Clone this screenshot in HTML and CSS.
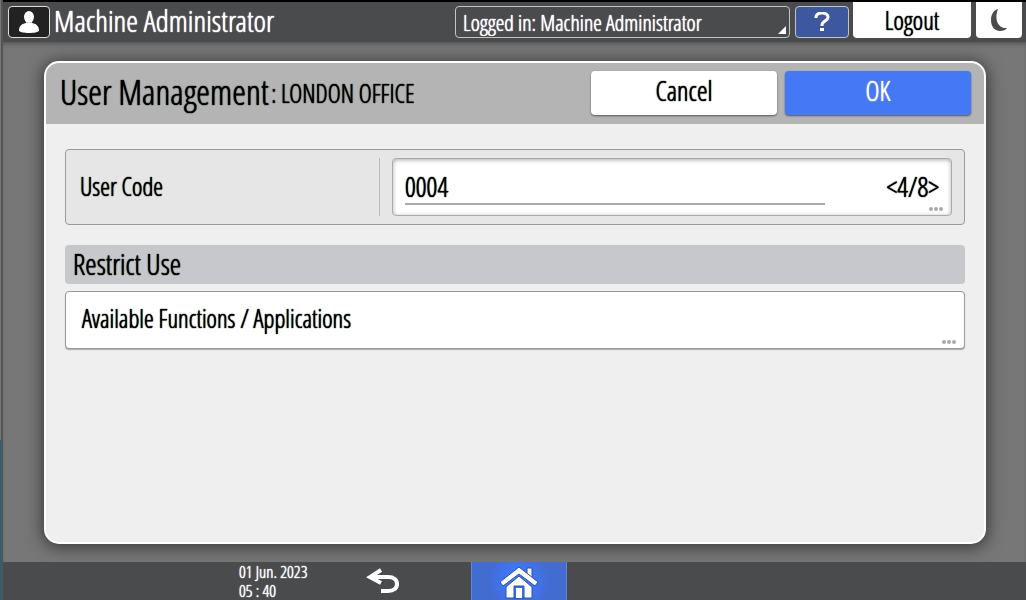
FILE: index.html
```html
<!doctype html>
<html lang="en">
    <head>
        <meta charset="utf-8" />
        <meta name="viewport" content="width=device-width, initial-scale=1" />
        <title>User Management</title>
        <link rel="stylesheet" href="styles.css">
    </head>
    <body>
        <header class="topbar">
            <span class="user-badge">
                <svg width="20" height="22" viewBox="0 0 20 22" fill="#fff" aria-hidden="true">
                    <ellipse cx="10" cy="6" rx="5" ry="6" />
                    <path d="M7 11q3 2 6 0v1c5 1 7 4 7 7v1c-1 1-5 2-10 2S1 21 0 20v-1c0-3 2-6 7-7z" />
                </svg>
            </span>
            <span class="user-name">Machine Administrator</span>

            <div class="login">
                <select class="login-select" aria-label="Logged in user">
                    <option>Logged in: Machine Administrator</option>
                </select>
            </div>
            <button type="button" class="help-button" aria-label="Help">
                <svg width="16" height="20" viewBox="0 0 16 20" aria-hidden="true">
                    <path d="M2 6V5c0-2 2-4 6-4s6 2 6 4c0 4-6 4-6 8v1" fill="none" stroke="#fff" stroke-width="3" />
                    <path d="M6 16h4v3H6z" fill="#fff" />
                </svg>
            </button>
            <button type="button" class="logout-button">Logout</button>
            <button type="button" class="sleep-button" aria-label="Sleep">
                <svg width="18" height="22" viewBox="0 0 18 22" fill="#4a4b4d" aria-hidden="true">
                    <path d="M8 0C4 1 1 5 1 11c0 7 4 11 9 11 3 0 6-1 7-3C8 20 4 10 8 0z" />
                </svg>
            </button>
        </header>

        <main class="screen">
            <form class="dialog">
                <div class="dialog-header">
                    <h1 class="dialog-title">User Management <small>: LONDON OFFICE</small></h1>
                    <button type="button" class="button">Cancel</button>
                    <button type="button" class="button button-primary">OK</button>
                </div>

                <div class="dialog-body">
                    <div class="field">
                        <label class="field-label" for="user-code">User Code</label>
                        <div class="field-box">
                            <input type="text" id="user-code" class="field-input" value="0004" maxlength="8" />
                            <span class="field-count">&lt;4/8&gt;</span>
                            <span class="dots"><i></i><i></i><i></i></span>
                        </div>
                    </div>

                    <h2 class="section-title">Restrict Use</h2>
                    <button type="button" class="row-button">
                        Available Functions / Applications
                        <span class="dots"><i></i><i></i><i></i></span>
                    </button>
                </div>
            </form>
        </main>

        <footer class="bottombar">
            <time class="clock" datetime="2023-06-01T05:40">
                <span>01 Jun. 2023</span>
                <span>05 : 40</span>
            </time>
            <button type="button" class="back-button" aria-label="Back">
                <svg width="34" height="26" viewBox="0 0 34 26" fill="none" stroke="#fff" stroke-width="4" aria-hidden="true">
                    <path d="M16 2 5 9l11 6" />
                    <path d="M5 9h18c6 0 9 3 9 7s-3 7-9 7h-7" />
                </svg>
            </button>
            <button type="button" class="home-button" aria-label="Home">
                <svg width="40" height="34" viewBox="0 0 40 34" fill="#fff" stroke="#2a50a8" aria-hidden="true">
                    <path d="M28 2h5v13l-5-4z" />
                    <path d="M20 10 33 21v11H7V21z" />
                    <path d="M15 20h10v12H15z" fill="#3d6fec" />
                    <path d="M17 22h6v10h-6z" stroke="none" />
                    <path d="M20 1 39 16l-3 4L20 8 4 20l-3-4z" />
                </svg>
            </button>
        </footer>
    </body>
</html>
```

FILE: styles.css
```css
* {
    box-sizing: border-box;
}

body {
    display: flex;
    flex-direction: column;
    min-height: 100vh;
    margin: 0;
    padding-left: 3px;
    background: linear-gradient(#777 440px, #1c6485 440px) no-repeat 0 0 / 1px 100%, #555;
    font-family: "Open Sans Condensed Light", "Roboto Condensed", "Liberation Sans Narrow", "Liberation Sans", sans-serif;
    font-size: 25px;
    color: #000;
    text-shadow: 0 0 1px currentColor, 0 0 1px currentColor;
}

button,
input,
select {
    margin: 0;
    padding: 0;
    border: 0;
    font: inherit;
    color: inherit;
    text-shadow: inherit;
}

svg {
    display: block;
}

/* Top bar */
.topbar {
    display: flex;
    align-items: center;
    height: 42px;
    padding: 0 4px 0 5px;
    border-top: 2px solid #000;
    background: #4a4b4d;
    color: #fff;
}

.user-badge {
    display: flex;
    align-items: center;
    justify-content: center;
    width: 42px;
    height: 32px;
    margin-right: 4px;
    border: 1px solid #ddd;
    border-radius: 4px;
    background: #222;
}

.user-name {
    flex: 1;
    padding-bottom: 2px;
    font-size: 30px;
    line-height: 32px;
    white-space: nowrap;
}

.login {
    position: relative;
    width: 335px;
    margin-right: 5px;
}

.login-select {
    display: block;
    width: 100%;
    height: 32px;
    padding: 0 7px;
    border: 1px solid #c4c4c4;
    border-radius: 4px;
    background: #4a4b4d;
    font-size: 22px;
    line-height: 28px;
    appearance: none;
}

.login::after {
    content: "";
    position: absolute;
    right: 4px;
    bottom: 4px;
    border-left: 8px solid transparent;
    border-bottom: 8px solid #fff;
}

.help-button {
    display: flex;
    align-items: center;
    justify-content: center;
    width: 54px;
    height: 32px;
    margin-right: 4px;
    border: 1px solid #c4c4c4;
    border-radius: 4px;
    background: #3d589f;
}

.logout-button,
.sleep-button {
    align-self: flex-start;
    height: 36px;
    border-radius: 0 0 4px 4px;
    background: #fff;
    color: #000;
    line-height: 36px;
}

.logout-button {
    width: 118px;
    margin-right: 5px;
}

.sleep-button {
    display: flex;
    align-items: center;
    justify-content: center;
    width: 46px;
}

/* Dialog */
.screen {
    display: flex;
    flex: 1;
    padding: 19px 40px 18px 41px;
    background: #777;
    box-shadow: inset 0 4px 4px -2px #555;
}

.dialog {
    flex: 1;
    overflow: hidden;
    border: 2px solid #fff;
    border-radius: 15px;
    background: #efefef;
    box-shadow: 0 2px 16px 2px rgba(0, 0, 0, 0.5);
}

.dialog-header {
    display: flex;
    align-items: center;
    gap: 8px;
    height: 61px;
    padding: 0 13px 2px 14px;
    background: #b4b4b4;
}

.dialog-title {
    flex: 1;
    margin: 0;
    font-size: 35px;
    font-weight: normal;
    line-height: 40px;
    white-space: nowrap;
}

.dialog-title small {
    margin-left: -4px;
    font-size: 25px;
    vertical-align: 2px;
}

.button {
    width: 186px;
    height: 44px;
    padding-bottom: 4px;
    border-radius: 4px;
    background: #fff;
    box-shadow: 0 1px 2px #555;
    font-size: 27px;
    line-height: 40px;
}

.button-primary {
    background: #4478f4;
    color: #fff;
}

.dialog-body {
    padding: 25px 19px;
}

.field {
    display: flex;
    padding: 8px 12px 8px 14px;
    border: 1px solid #999;
    border-radius: 4px;
    background: #e6e6e6;
}

.field-label {
    width: 300px;
    margin-right: 12px;
    border-right: 1px solid #bbb;
    line-height: 56px;
}

.field-box {
    position: relative;
    display: flex;
    flex: 1;
    align-items: center;
    justify-content: space-between;
    height: 58px;
    padding: 0 12px;
    border: 1px solid #aaa;
    border-radius: 4px;
    background: #fff;
    box-shadow: inset 0 1px 4px #aaa;
    font-size: 27px;
}

.field-input {
    width: 420px;
    height: 36px;
    border-bottom: 2px solid #aaa;
    background: none;
}

.field-count {
    padding-bottom: 2px;
}

.dots {
    position: absolute;
    right: 8px;
    bottom: 4px;
    display: flex;
    gap: 1px;
}

.dots i {
    width: 4px;
    height: 4px;
    border-radius: 50%;
    background: #aaa;
}

.section-title {
    margin: 20px 0 7px;
    padding: 0 8px 2px;
    border-radius: 4px;
    background: #c7c8cc;
    font-size: 29px;
    font-weight: normal;
    line-height: 37px;
}

.row-button {
    position: relative;
    width: 100%;
    height: 58px;
    padding: 0 16px 4px;
    border: 1px solid #999;
    border-radius: 4px;
    background: #fff;
    box-shadow: 0 1px 1px #aaa;
    text-align: left;
}

/* Bottom bar */
.bottombar {
    display: flex;
    height: 38px;
    padding-left: 236px;
    background: #4a4b4d;
    color: #fff;
}

.clock {
    display: flex;
    flex-direction: column;
    width: 126px;
    font-size: 17px;
    line-height: 19px;
    white-space: nowrap;
}

.back-button {
    display: flex;
    align-items: center;
    width: 106px;
    background: none;
}

.home-button {
    display: flex;
    justify-content: center;
    width: 96px;
    padding-top: 4px;
    border: solid #5f86e0;
    border-width: 0 1px;
    background: radial-gradient(circle, #3f78ff 20%, #426cd0 60%);
}
```
